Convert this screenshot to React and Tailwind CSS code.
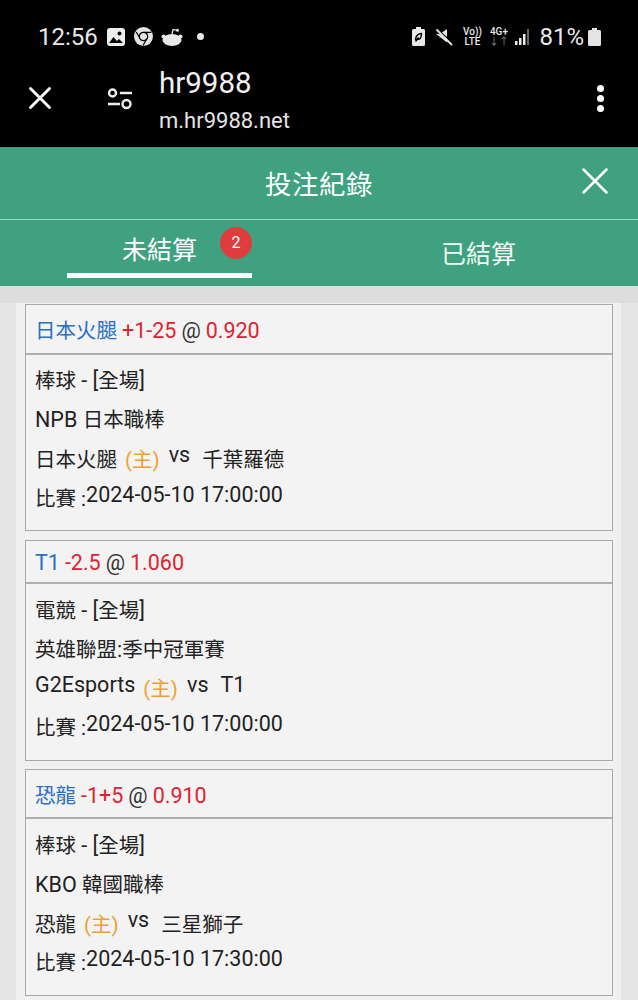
import { X } from "lucide-react";

const FONT = "font-['Roboto','Noto_Sans_CJK_TC',sans-serif]";

const BETS = [
  {
    team: "日本火腿",
    line: "+1-25",
    odds: "0.920",
    sport: "棒球 - [全場]",
    league: "NPB 日本職棒",
    home: "日本火腿",
    away: "千葉羅德",
    time: "2024-05-10 17:00:00",
    gap: "",
    headH: "h-[50px] pt-[5px]",
    bodyH: "h-[175px]",
    rows: ["pt-[13px]", "mt-[13px]", "mt-[14px]", "mt-[13px]"],
    vs: "-translate-y-[5px]",
  },
  {
    team: "T1",
    line: "-2.5",
    odds: "1.060",
    sport: "電競 - [全場]",
    league: "英雄聯盟:季中冠軍賽",
    home: "G2Esports",
    away: "T1",
    time: "2024-05-10 17:00:00",
    gap: "mt-[9px]",
    headH: "h-[43px] pt-[3px]",
    bodyH: "h-[176px]",
    rows: ["pt-[14px]", "mt-[13px]", "mt-[13px]", "mt-[13px]"],
    vs: "-translate-y-[4px]",
    homeUp: true,
  },
  {
    team: "恐龍",
    line: "-1+5",
    odds: "0.910",
    sport: "棒球 - [全場]",
    league: "KBO 韓國職棒",
    home: "恐龍",
    away: "三星獅子",
    time: "2024-05-10 17:30:00",
    gap: "mt-[8px]",
    headH: "h-[49px] pt-[5px]",
    bodyH: "h-[176px]",
    rows: ["pt-[14px]", "mt-[13px]", "mt-[14px]", "mt-[12px]"],
    vs: "-translate-y-[5px]",
  },
];

// latin runs sit a little larger than the CJK ones in the reference
function Mixed({ text }) {
  return text.split(/([\u4e00-\u9fff]+)/).map((part, i) =>
    /[\u4e00-\u9fff]/.test(part) ? (
      <span key={i}>{part}</span>
    ) : (
      <span key={i} className="text-[21.500px]">{part}</span>
    )
  );
}

function StatusBar() {
  return (
    <div className="flex h-[72px] items-center justify-between pl-[38px] pr-[37px] pt-[1px] text-white">
      <div className="flex items-center">
        <span className="text-[24px] leading-none text-[#e8e8e8]">12:56</span>
        {/* gallery */}
        <svg className="ml-[9px]" width="18" height="18" viewBox="0 0 18 18">
          <rect width="18" height="18" rx="3" fill="#eee" />
          <circle cx="12.500" cy="5.500" r="2" fill="#000" />
          <path d="M2 15l4.500-6 3.500 4 2-2 4 4z" fill="#000" />
        </svg>
        {/* chrome */}
        <svg className="ml-[9px]" width="19" height="19" viewBox="0 0 19 19">
          <circle cx="9.500" cy="9.500" r="9.500" fill="#e4e4e4" />
          <circle cx="9.500" cy="9.500" r="4.200" fill="#e4e4e4" stroke="#000" strokeWidth="1.200" />
          <path d="M9.500 5.300h8M6 11.500L2.300 5M13 11.500L9 18.500" stroke="#000" strokeWidth="1.200" fill="none" />
        </svg>
        {/* reddit */}
        <svg className="ml-[8px]" width="22" height="18" viewBox="0 0 22 18">
          <ellipse cx="11" cy="12" rx="9.500" ry="6" fill="#e8e8e8" />
          <circle cx="2.500" cy="8.500" r="2" fill="#e8e8e8" />
          <circle cx="19.500" cy="8.500" r="2" fill="#e8e8e8" />
          <path d="M11 6l1-4.500 4 .8" stroke="#e8e8e8" strokeWidth="1.200" fill="none" />
          <circle cx="16.500" cy="2.300" r="1.500" fill="#e8e8e8" />
        </svg>
        <span className="ml-[14px] size-[7px] rounded-full bg-[#e8e8e8]" />
      </div>
      <div className="flex items-center">
        {/* battery saver */}
        <svg width="13" height="19" viewBox="0 0 13 19">
          <path d="M4 0h5v2h2.500a1.500 1.500 0 0 1 1.500 1.500v14a1.500 1.500 0 0 1-1.500 1.500h-10A1.500 1.500 0 0 1 0 17.500v-14A1.500 1.500 0 0 1 1.500 2H4z" fill="#e8e8e8" />
          <path d="M3.500 13c0-4 2-6 6-6.500 0 4-1.500 6-4 6M3.500 14.500l3-4" stroke="#000" strokeWidth="1.400" fill="none" />
        </svg>
        {/* muted */}
        <svg className="ml-[10px]" width="18" height="18" viewBox="0 0 18 18">
          <path d="M1 6h3l2 1 6 6v1zM12 1v8L7 4.500z" fill="#e8e8e8" />
          <path d="M3 9.500h3l6 5v-4z" fill="#e8e8e8" />
          <path d="M1.500 1.500L17 17" stroke="#e8e8e8" strokeWidth="1.800" />
        </svg>
        <div className="ml-[10px] flex w-[18px] flex-col items-center text-[10px] font-medium leading-[10px] text-[#e8e8e8]">
          <span>Vo))</span>
          <span>LTE</span>
        </div>
        <div className="ml-[8px] flex w-[19px] flex-col items-center text-[10px] font-medium leading-[10px] text-[#e8e8e8]">
          <span>4G+</span>
          <span className="text-[#777]">↓↑</span>
        </div>
        {/* signal */}
        <svg className="ml-[7px]" width="16" height="17" viewBox="0 0 16 17">
          <rect x="0" y="13" width="2.500" height="4" fill="#e8e8e8" />
          <rect x="4" y="10" width="2.500" height="7" fill="#e8e8e8" />
          <rect x="8" y="6" width="2.500" height="11" fill="#e8e8e8" />
          <rect x="12" y="1" width="2" height="16" fill="#666" />
        </svg>
        <span className="ml-[8px] text-[24px] leading-none text-[#e8e8e8]">81%</span>
        <svg className="ml-[4px]" width="13" height="18" viewBox="0 0 13 18">
          <path d="M4 0h5v2h2.500A1.500 1.500 0 0 1 13 3.500v13a1.500 1.500 0 0 1-1.500 1.500h-10A1.500 1.500 0 0 1 0 16.500v-13A1.500 1.500 0 0 1 1.500 2H4z" fill="#e4e4e4" />
        </svg>
      </div>
    </div>
  );
}

function BrowserBar() {
  return (
    <div className="flex h-[75px] items-start pl-[21px] pr-[34px] text-white">
      <X className="mt-[7px] size-[38px]" strokeWidth={1.800} />
      <svg className="ml-[48px] mt-[16px]" width="26" height="24" viewBox="0 0 26 24" fill="none" stroke="#eee" strokeWidth="2.400">
        <circle cx="5.500" cy="5" r="3.500" />
        <path d="M13 5h12M1 16h12" />
        <circle cx="19.500" cy="16" r="4" />
      </svg>
      <div className="ml-[26px] flex flex-col">
        <span className="-mt-[6px] text-[29.500px] leading-[34px] text-[#f2f2f2]">hr9988</span>
        <span className="mt-[8px] text-[22px] leading-[26px] text-[#e4e4e4]">m.hr9988.net</span>
      </div>
      <div className="ml-auto mt-[13px] flex flex-col gap-[3px]">
        <span className="size-[7px] rounded-full bg-white" />
        <span className="size-[7px] rounded-full bg-white" />
        <span className="size-[7px] rounded-full bg-white" />
      </div>
    </div>
  );
}

function BetCard({ bet }) {
  return (
    <div className={`border border-[#a9a9a9] bg-[#f3f3f3] text-[#222] ${bet.gap}`}>
      <div className={`flex items-center border-b-2 border-[#b0b0b0] pl-[9px] text-[20.500px] ${bet.headH}`}>
        <span className="text-[#2a6fc4]"><Mixed text={bet.team} /></span>
        <span className="ml-[5px] text-[21.500px] text-[#dc2430]">{bet.line}</span>
        <span className="ml-[5px] text-[21.500px] text-[#333]">@</span>
        <span className="ml-[5px] text-[21.500px] text-[#dc2430]">{bet.odds}</span>
      </div>
      <div className={`flex flex-col pl-[9px] text-[20.500px] leading-[26px] ${bet.bodyH}`}>
        <div className={bet.rows[0]}><Mixed text={bet.sport} /></div>
        <div className={bet.rows[1]}><Mixed text={bet.league} /></div>
        <div className={`flex items-center ${bet.rows[2]}`}>
          <span className={bet.homeUp ? "-translate-y-[4px]" : ""}><Mixed text={bet.home} /></span>
          <span className="ml-[8px] text-[#f0a030]">(主)</span>
          <span className={`ml-[9px] text-[21.500px] ${bet.vs}`}>vs</span>
          <span className={`ml-[12px] ${bet.homeUp ? "-translate-y-[4px]" : ""}`}><Mixed text={bet.away} /></span>
        </div>
        <div className={`flex items-center ${bet.rows[3]}`}>
          <span>比賽 :</span>
          <span className="-translate-y-[4px] text-[21.500px]">{bet.time}</span>
        </div>
      </div>
    </div>
  );
}

export default function App() {
  return (
    <div className={`flex h-[1000px] w-[638px] flex-col overflow-hidden bg-[#e4e4e4] ${FONT}`}>
      <div className="h-[147px] bg-black">
        <StatusBar />
        <BrowserBar />
      </div>

      <div className="bg-[#3fa17f] text-white">
        <div className="relative flex h-[73px] items-center justify-center border-b border-[#a5d3c1] pt-[3px]">
          <span className="text-[26.500px] tracking-[0.500px]">投注紀錄</span>
          <X className="absolute right-[20px] top-[11px] size-[46px]" strokeWidth={1.300} />
        </div>
        <div className="flex h-[66px]">
          <div className="flex w-[319px] justify-end">
            <div className="relative mr-[67px] h-[58px] w-[185px] border-b-[5px] border-white pt-[14px] text-center text-[25px] leading-[34px]">
              未結算
              <span className="absolute right-0 top-[7px] flex size-[32px] items-center justify-center rounded-full bg-[#df3d3d] text-[16px] leading-none">
                2
              </span>
            </div>
          </div>
          <div className="flex w-[319px] justify-center pt-[18px] text-[25px] leading-[34px] text-[#f0f8f4]">
            已結算
          </div>
        </div>
      </div>

      <div className="h-[17px] bg-[#dddddd]" />
      <div className="ml-[16px] w-[605px] flex-1 bg-[#f0f0f0] pl-[9px] pr-[8px] pt-[1px]">
        {BETS.map((bet) => (
          <BetCard key={bet.team} bet={bet} />
        ))}
      </div>
    </div>
  );
}
